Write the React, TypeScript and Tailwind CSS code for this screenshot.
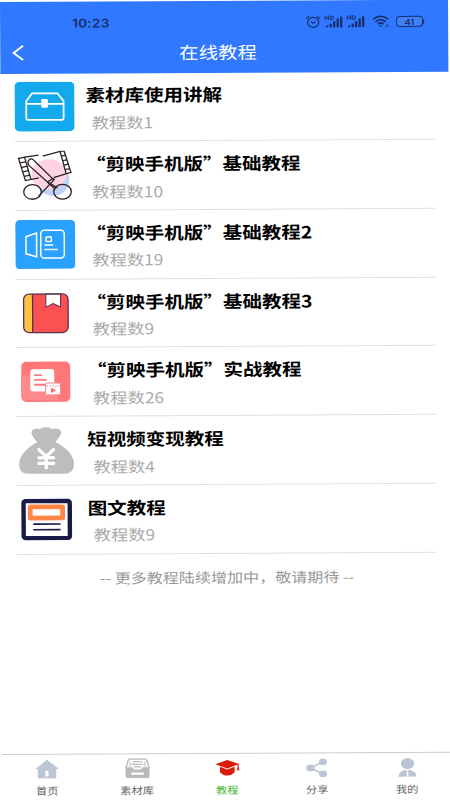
import type { ReactNode } from "react";

const ChestIcon = () => (
  <svg width="60" height="49.5" viewBox="0 0 60 50" preserveAspectRatio="none" fill="none">
    <rect width="60" height="50" rx="5" fill="#12aaec" />
    <path d="M11.7 37V19.5L17.5 11.7H43L49 19.5V37Q49 38.5 47.5 38.5H13.2Q11.7 38.5 11.7 37ZM11.7 22.3H49" stroke="#fff" strokeWidth="1.8" />
    <rect x="26.7" y="17.3" width="6.6" height="9" rx="0.8" fill="#fff" />
  </svg>
);

const ScissorsIcon = () => (
  <svg width="60" height="49.5" viewBox="0 0 60 50" preserveAspectRatio="none" fill="none">
    <ellipse cx="38" cy="30" rx="16.5" ry="15.5" fill="#bfd2f7" />
    <ellipse cx="34" cy="24" rx="17.5" ry="15.5" fill="#ffd3df" />
    <g stroke="#2a2226" strokeWidth="1.3">
      <path d="M23.7 4.3L9.7 6.3L3.7 7.7L10.5 30L24 27.3M9.7 6.3L16 28.7" />
      <path d="M5 12.2L11 11M6.4 16.8L12.4 15.5M7.8 21.2L13.7 20M9.2 25.8L15 24.5" />
      <path d="M28 5.4L45.3 0.8L49.3 0.3L56 22L38.7 27.2M45.3 0.8L51.3 23.5" />
      <path d="M46.5 5.4L50.8 4.6M47.8 10L52.2 9.2M49 14.6L53.6 13.7M50.2 19.2L55 18.2" />
      <path d="M42.5 37.5L32.5 31.5L13.8 14.5Q12.3 11 14.4 9Q17 6.8 19.4 10L37.6 28.2L32.5 31.5" />
      <path d="M37.6 28.2L39.3 29L23.5 46M32.5 31.5L40.5 39" />
      <ellipse cx="17.5" cy="41.5" rx="8.8" ry="7.4" />
      <ellipse cx="47.5" cy="41.5" rx="8.8" ry="7.4" />
    </g>
  </svg>
);

const ProjectorIcon = () => (
  <svg width="60" height="49.5" viewBox="0 0 60 50" preserveAspectRatio="none" fill="none">
    <rect width="60" height="50" rx="5" fill="#29a1ff" />
    <g stroke="#fff" strokeWidth="1.5">
      <path d="M10.7 17L21.3 13.3V37.3L10.7 34.3Z" />
      <rect x="25.5" y="10.7" width="23.5" height="28" rx="3.5" />
      <rect x="30.7" y="17.3" width="5.4" height="4.6" rx="1" />
      <path d="M29 25.5H38M29 30H42.5" />
    </g>
  </svg>
);

const BookIcon = () => (
  <svg width="60" height="49.5" viewBox="0 0 60 50" preserveAspectRatio="none" fill="none">
    <rect x="8" y="5.3" width="44.5" height="39" rx="5.5" fill="#fb5152" />
    <path d="M17 5.3H13.5Q8 5.3 8 10.8V38.8Q8 44.3 13.5 44.3H17Z" fill="#fdc143" />
    <path d="M30.3 5.3H45V18.5L37.6 15L30.3 18.5Z" fill="#fff" stroke="#59304f" />
    <path d="M17 5.3V44.3" stroke="#59304f" strokeWidth="1.3" />
    <rect x="8" y="5.3" width="44.5" height="39" rx="5.5" stroke="#59304f" strokeWidth="1.3" />
  </svg>
);

const LessonIcon = () => (
  <svg width="60" height="49.5" viewBox="0 0 60 50" preserveAspectRatio="none" fill="none">
    <rect x="5.3" y="5" width="49" height="40.5" rx="5" fill="#ff7779" />
    <path d="M5.3 19C20 18 41 26 42.5 44H10.3Q5.3 44 5.3 40Z" fill="#ff8a8b" />
    <rect x="14.3" y="12.5" width="24" height="22.5" rx="2.5" fill="#fff" />
    <path d="M19 18.5H25M19 23.3H30M19 28.2H29" stroke="#ff7779" strokeWidth="1.9" strokeLinecap="round" />
    <rect x="29.5" y="26.5" width="15" height="12" rx="1" fill="#fff" stroke="#ff8587" strokeWidth="1" />
    <path d="M30 29.6H44.5" stroke="#ff9c9c" strokeWidth="1" strokeDasharray="2 1" />
    <path d="M35 31.3V36.7L40 34Z" fill="#ff6668" />
  </svg>
);

const MoneyBagIcon = () => (
  <svg width="60" height="49.5" viewBox="0 0 60 50" preserveAspectRatio="none" fill="none">
    <path
      d="M21 16.5C17 12 14.5 8.5 15.5 5.5C17 2.5 21 2.2 23.5 3.5C26 .8 33 .8 35.5 3.5C39 2.2 43.5 2.5 44.8 5.5C45.5 8.5 42.5 12 39 16.5C48 21 57.7 29 57.7 39Q57.5 48.5 48 48.5H12Q2.8 48.5 2.7 39C2.7 29 12 21 21 16.5Z"
      fill="#bdbdbd"
    />
    <path d="M22.5 24L29.8 31L37.2 24M29.8 31V42.5M22.5 32.3H37.2M22.5 38H37.2" stroke="#fff" strokeWidth="3.3" strokeLinecap="round" />
  </svg>
);

const ArticleIcon = () => (
  <svg width="60" height="49.5" viewBox="0 0 60 50" preserveAspectRatio="none" fill="none">
    <rect x="6.9" y="6.3" width="46.2" height="37.4" rx="2" fill="#fff" stroke="#181a48" strokeWidth="4.4" />
    <rect x="13.6" y="12.2" width="32.3" height="11.3" stroke="#ff8745" strokeWidth="4.8" strokeLinejoin="round" />
    <path d="M16.5 29.6H43.8M16.5 35.3H43.8" stroke="#181a48" strokeWidth="1.7" />
  </svg>
);

const HomeIcon = () => (
  <svg width="24" height="19" viewBox="0 0 24 19" fill="#bcc5d3">
    <path d="M12 0L24 9.3H21.3V17.5Q21.3 18.8 20 18.8H4Q2.7 18.8 2.7 17.5V9.3H0Z" />
    <rect x="10.4" y="11" width="3" height="5.8" fill="#fff" />
  </svg>
);

const ArchiveIcon = () => (
  <svg width="25" height="20" viewBox="0 0 25 20" fill="none">
    <path d="M1 9.5L3.2 2Q3.6 .7 5 .7H20Q21.4 .7 21.8 2L24 9.5" stroke="#b9b9b9" strokeWidth="1.4" />
    <path d="M7.5 3.5H17.5M6.5 6H18.5" stroke="#b9b9b9" strokeWidth="1.2" />
    <path d="M5 8.6V3" stroke="#b9b9b9" />
    <path d="M20 8.6V3" stroke="#b9b9b9" />
    <path d="M.5 9H7.5Q8.3 11.3 10 11.3H15Q16.7 11.3 17.5 9H24.5V17.5Q24.5 20 22 20H3Q.5 20 .5 17.5Z" fill="#b9b9b9" />
    <path d="M9 8.6H16" stroke="#b9b9b9" strokeWidth="1.1" />
    <rect x="6" y="14.3" width="13" height="2.2" rx="1" fill="#fff" />
  </svg>
);

const CapIcon = () => (
  <svg width="25" height="18" viewBox="0 0 25 18" fill="#dd1b0a">
    <path d="M12.3 1.2L24.3 5.3L12.3 9.8L.3 5.3Z" />
    <path d="M5 8L12.3 10.8L19.6 8V13.3Q16.5 16.8 12.3 16.8T5 13.3Z" />
    <path d="M22.5 5.5H23.8V9L24.5 11.5H21.8L22.5 9Z" />
  </svg>
);

const ShareIcon = () => (
  <svg width="22" height="19" viewBox="0 0 22 19" fill="#bcc5d3">
    <path d="M17 3.5L4.5 9.6L17 15.6" fill="none" stroke="#bcc5d3" strokeWidth="1.6" />
    <ellipse cx="4.4" cy="9.6" rx="4.2" ry="3.5" />
    <ellipse cx="17" cy="3.5" rx="4" ry="3.3" />
    <ellipse cx="17" cy="15.6" rx="4" ry="3.3" />
  </svg>
);

const UserIcon = () => (
  <svg width="19" height="19" viewBox="0 0 19 19" fill="#bcc5d3">
    <ellipse cx="9.5" cy="5.6" rx="6.7" ry="5.6" />
    <path d="M.5 18.8Q.8 13.5 6.5 12.1L8.3 12L9.5 13.5L10.7 12L12.5 12.1Q18.2 13.5 18.5 18.8Z" />
    <path d="M8.8 13L9.5 14L10.2 13L10.3 18.8H8.7Z" fill="#fff" />
  </svg>
);

const Signal = () => (
  <svg width="19" height="13" viewBox="0 0 19 13" fill="#172e66" className="overflow-visible">
    <text x="-0.5" y="4.6" fontSize="6" fontWeight="700" textLength="9.5" lengthAdjust="spacingAndGlyphs">HD</text>
    <rect x="1" y="10.2" width="2" height="1.8" />
    <rect x="4.4" y="8.6" width="2.3" height="3.4" />
    <rect x="7.9" y="6" width="2.3" height="6" />
    <rect x="11.4" y="3.2" width="2.3" height="8.8" />
    <rect x="14.9" y="1.5" width="2.3" height="10.5" />
  </svg>
);

const StatusIcons = () => (
  <div className="flex items-center">
    <svg width="16" height="13" viewBox="0 0 16 13" fill="none" stroke="#172e66" strokeWidth="1.2">
      <ellipse cx="8" cy="7" rx="5.6" ry="5" />
      <path d="M1 3.2L4 .9M15 3.2L12 .9M5.6 6.2L8 8L10.4 6.2" />
    </svg>
    <div className="ml-[4px]">
      <Signal />
    </div>
    <div className="ml-[3px]">
      <Signal />
    </div>
    <svg className="ml-[6px]" width="18" height="13" viewBox="0 0 18 13" fill="none" stroke="#172e66" strokeWidth="1.6">
      <path d="M.8 4.3Q8.5 -1.8 16.2 4.3M3.3 6.8Q8.5 2.6 13.7 6.8M5.6 9Q8.5 6.8 11.4 9" />
      <path d="M6.8 10.3H10.2L8.5 12Z" fill="#172e66" stroke="none" />
      <path d="M13.5 11L16 9.5M14 12L16.5 10.5" strokeWidth="0.7" />
    </svg>
    <div className="ml-[6px] flex h-[11px] w-[27px] items-center justify-center rounded-[4px] border-[1.4px] border-[#172e66] bg-[#4080f6]">
      <span className="text-[8px] leading-none font-semibold scale-x-115">41</span>
    </div>
    <div className="h-[4px] w-[1.5px] bg-[#172e66]" />
  </div>
);

const courses = [
  { title: "素材库使用讲解", count: 1, icon: <ChestIcon /> },
  { title: "“剪映手机版”基础教程", count: 10, icon: <ScissorsIcon /> },
  { title: "“剪映手机版”基础教程2", count: 19, icon: <ProjectorIcon /> },
  { title: "“剪映手机版”基础教程3", count: 9, icon: <BookIcon /> },
  { title: "“剪映手机版”实战教程", count: 26, icon: <LessonIcon /> },
  { title: "短视频变现教程", count: 4, icon: <MoneyBagIcon /> },
  { title: "图文教程", count: 9, icon: <ArticleIcon /> },
];

type TabProps = { label: string; icon: ReactNode; active?: boolean };

const Tab = ({ label, icon, active }: TabProps) => (
  <a href="#" className="flex w-[90px] flex-col items-center">
    <div className="flex h-5 items-center">{icon}</div>
    <span className={`mt-[6px] text-[10px] leading-[12px] scale-x-112 ${active ? "text-[#41b52c]" : "text-[#666]"}`}>
      {label}
    </span>
  </a>
);

export default function App() {
  return (
    <div
      lang="zh-CN"
      className="h-[800px] w-[450px] overflow-hidden bg-white font-['Noto_Sans_CJK_SC',sans-serif]"
    >
      {/* the whole screen is tilted very slightly */}
      <div className="flex h-[806px] w-[448px] origin-top-left -rotate-[0.3deg] flex-col pt-[1.7px]">
        <header className="h-[72px] shrink-0 bg-[#2f78ff]">
          <div className="flex h-[42px] items-center justify-between pt-[2px] pr-[24px] pl-[72px] font-[Inter,sans-serif] text-[#172e66]">
            <span className="origin-left text-[12px] font-semibold tracking-[0.3px] scale-x-112">10:23</span>
            <StatusIcons />
          </div>
          <div className="flex h-[20px] items-center text-white">
            <svg className="mt-[-2px] ml-[12px]" width="12" height="16" viewBox="0 0 12 16" fill="none" stroke="#fff" strokeWidth="1.9">
              <path d="M10.8 .8L1.3 8L10.8 15.2" />
            </svg>
            <h1 className="mt-[-1px] ml-[155px] origin-left text-[17px] leading-[20px] scale-x-114">在线教程</h1>
          </div>
        </header>

        <ul className="ml-[14px] w-[420px]">
          {courses.map((course) => (
            <li key={course.title} className="flex h-[68.7px] border-b-[1.3px] border-[#dfdfdf] pt-[8.8px]">
              {course.icon}
              <div className="ml-[11px]">
                <h2 className="mt-[2px] origin-left text-[17px] leading-[22px] font-bold whitespace-nowrap text-black scale-x-[1.147]">
                  {course.title}
                </h2>
                <p className="mt-[6.6px] ml-[6px] origin-left text-[15px] leading-[20px] whitespace-nowrap text-[#aaa] scale-x-[1.15]">
                  教程数{course.count}
                </p>
              </div>
            </li>
          ))}
        </ul>

        <p className="mt-[12.5px] text-center text-[14px] leading-[22px] text-[#999] scale-x-[1.147]">
          -- 更多教程陆续增加中，敬请期待 --
        </p>

        <nav className="mt-auto -ml-[2px] flex h-[52px] w-[450px] border-t-[1.3px] border-[#ccc] pt-[4px]">
          <Tab label="首页" icon={<HomeIcon />} />
          <Tab label="素材库" icon={<ArchiveIcon />} />
          <Tab label="教程" icon={<CapIcon />} active />
          <Tab label="分享" icon={<ShareIcon />} />
          <Tab label="我的" icon={<UserIcon />} />
        </nav>
      </div>
    </div>
  );
}
